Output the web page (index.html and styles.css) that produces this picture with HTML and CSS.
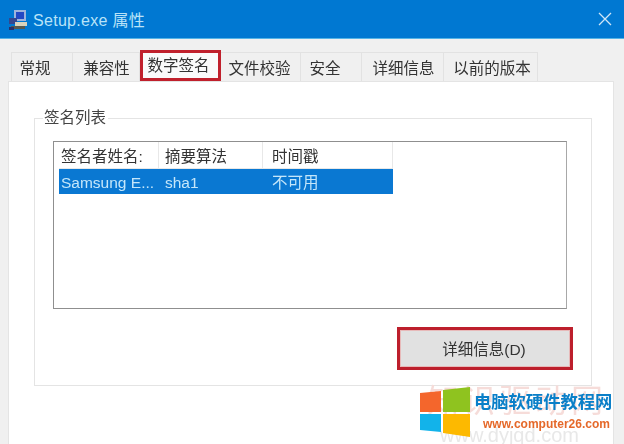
FILE: index.html
```html
<!DOCTYPE html>
<html lang="zh-CN">
<head>
<meta charset="utf-8">
<title>Setup.exe 属性</title>
<link rel="stylesheet" href="styles.css">
</head>
<body>
<div class="window">
  <header class="titlebar">
    <svg class="app-icon" width="20" height="22" viewBox="0 0 20 22">
      <rect x="6" y="1" width="12" height="11" fill="#9fb4dc"/>
      <rect x="8" y="3" width="8" height="7" fill="#2448c4"/>
      <rect x="1" y="9" width="8" height="6" fill="#34478f"/>
      <rect x="7" y="13" width="12" height="4" fill="#d9d3bd"/>
      <rect x="3" y="17" width="14" height="3" fill="#57594f"/>
      <rect x="1" y="18" width="5" height="3" fill="#27306a"/>
    </svg>
    <span class="title">Setup.exe 属性</span>
    <svg class="close" width="14" height="14" viewBox="0 0 14 14">
      <path d="M1 1 13 13M13 1 1 13" stroke="#cfe6f7" stroke-width="1.3" fill="none"/>
    </svg>
  </header>
  <div class="body">
    <nav class="tabs">
      <span class="tab t1">常规</span>
      <span class="tab t2">兼容性</span>
      <span class="tab t3 active">数字签名</span>
      <span class="tab t4">文件校验</span>
      <span class="tab t5">安全</span>
      <span class="tab t6">详细信息</span>
      <span class="tab t7">以前的版本</span>
    </nav>
    <main class="panel">
      <section class="group">
        <span class="legend">签名列表</span>
        <div class="list">
          <div class="row head">
            <span class="c1">签名者姓名:</span>
            <span class="c2">摘要算法</span>
            <span class="c3">时间戳</span>
          </div>
          <div class="row selected">
            <span class="c1">Samsung E...</span>
            <span class="c2">sha1</span>
            <span class="c3">不可用</span>
          </div>
        </div>
        <div class="actions">
          <button class="details">详细信息(D)</button>
        </div>
      </section>
    </main>
  </div>
</div>
<div class="watermark">
  <span class="ghost-a">知识驱动网</span>
  <span class="ghost-b">www.dyjqd.com</span>
  <svg class="logo" width="51" height="51" viewBox="0 0 51 51">
    <path d="M0 6 21 4V25H0Z" fill="#f4662c"/>
    <path d="M23 3 50 0V25H23Z" fill="#8fc31f"/>
    <path d="M0 27H21V45L0 43Z" fill="#12b3ea"/>
    <path d="M23 27H50V50L23 46Z" fill="#fdb900"/>
  </svg>
  <span class="wm-cn">电脑软硬件教程网</span>
  <span class="wm-en">www.computer26.com</span>
</div>
</body>
</html>
```
FILE: styles.css
```css
* { box-sizing: border-box; }
html, body { margin: 0; padding: 0; }
body {
  width: 624px;
  height: 444px;
  overflow: hidden;
  position: relative;
  background: #f0f0f0;
  font-family: "Liberation Sans", "Noto Sans CJK SC", sans-serif;
  font-size: 15.5px;
  color: #333;
}
.window { height: 444px; display: flex; flex-direction: column; filter: blur(.35px); }
.titlebar {
  height: 39px;
  flex: none;
  background: #0078d2;
  border-bottom: 1px solid #55b4e6;
  display: flex;
  align-items: center;
  padding: 0 12px 0 8px;
  color: #b9e3f8;
}
.app-icon { flex: none; margin-top: 1px; }
.title { margin-left: 5px; font-size: 16px; letter-spacing: .3px; }
.close { margin-left: auto; }
.body { flex: 1; padding: 11px 10px 0 8px; display: flex; flex-direction: column; min-height: 0; }
.tabs { height: 31px; flex: none; display: flex; align-items: flex-end; padding-left: 3px; }
.tab {
  height: 29px;
  background: #f0f0f0;
  border: 1px solid #e2e2e2;
  border-bottom: 0;
  border-left: 0;
  display: flex;
  align-items: center;
  justify-content: center;
  font-size: 15.5px;
  flex: none;
}
.t1 { width: 62px; border-left: 1px solid #e2e2e2; padding-right: 14px; }
.t2 { width: 67px; padding-left: 1px; }
.t3 { width: 81px; }
.t4 { width: 80px; padding-right: 2px; }
.t5 { width: 61px; padding-right: 12px; }
.t6 { width: 82px; padding-left: 2px; }
.t7 { width: 94px; padding-left: 3px; }
.tab.active {
  height: 31px;
  background: #fafafa;
  border: 3px solid #c0202c;
  padding: 0 4px 4px 0;
  position: relative;
  z-index: 1;
}
.panel {
  flex: 1;
  background: #fff;
  border: 1px solid #e4e4e4;
  border-bottom: 0;
  padding: 36px 21px 0 25px;
  min-height: 0;
}
.group {
  position: relative;
  height: 268px;
  border: 1px solid #e4e4e4;
  padding: 22px 24px 0 18px;
}
.legend {
  position: absolute;
  top: -10px;
  left: 8px;
  background: #fff;
  padding: 0 2px 0 1px;
  line-height: 18px;
  font-size: 15.5px;
  color: #444;
}
.list {
  height: 168px;
  border: 1px solid #8f8f8f;
  border-right-color: #a8a8a8;
  padding: 0 0 0 5px;
  background: #fff;
}
.row { display: flex; width: 334px; align-items: center; font-size: 15.5px; }
.head { height: 27px; border-bottom: 1px solid #e8e8e8; }
.head span { border-right: 1px solid #e8e8e8; height: 100%; display: flex; align-items: center; }
.selected { height: 25px; background: #0a78d2; color: #c4e6fa; }
.selected .c1, .selected .c2 { padding-top: 2px; }
.selected .c3 { padding-bottom: 2px; }
.c1 { width: 100px; padding-left: 2px; white-space: nowrap; }
.c2 { width: 104px; padding-left: 6px; }
.c3 { width: 130px; padding-left: 9px; }
.actions { display: flex; justify-content: flex-end; padding: 18px 0 0; margin-right: -6px; }
.details {
  width: 176px;
  height: 43px;
  padding: 0 2px 2px 0;
  background: #e1e1e1;
  border: 3px solid #bd1f2c;
  outline: 1px solid #e7b9b9;
  outline-offset: -4px;
  font: inherit;
  font-size: 15.5px;
  color: #333;
}
.watermark { position: absolute; left: 420px; top: 387px; width: 204px; height: 57px; }
.logo { position: absolute; left: 0; top: 0; }
.ghost-a {
  position: absolute; left: 7px; top: -3px;
  font-size: 32px; line-height: 34px; letter-spacing: 4px;
  color: #f6dcd9; white-space: nowrap;
}
.ghost-b {
  position: absolute; left: 20px; top: 39px;
  font-size: 20px; line-height: 18px; color: #e8e8e8; white-space: nowrap;
}
.wm-cn {
  position: absolute; left: 54px; top: 5px;
  font-size: 17.3px; line-height: 20px; font-weight: 700;
  color: #0a7fc8; white-space: nowrap;
}
.wm-en {
  position: absolute; left: 63px; top: 29px;
  font-size: 12px; line-height: 16px; font-weight: 700;
  color: #e5692a; white-space: nowrap;
}
```
